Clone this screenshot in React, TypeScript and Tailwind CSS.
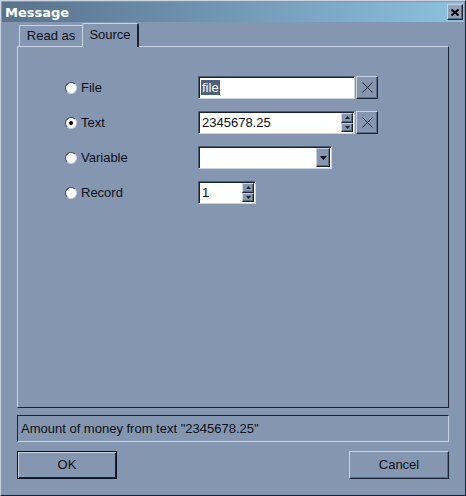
import React from "react";

const raised =
  "border border-t-[#c9d4e0] border-l-[#c9d4e0] border-r-[#1b2230] border-b-[#1b2230] shadow-[inset_-1px_-1px_0_#5d6c82]";
const sunken =
  "border border-t-[#4e5c70] border-l-[#4e5c70] border-r-[#c9d4e0] border-b-[#c9d4e0] shadow-[inset_1px_1px_0_#1b2230]";

export default function App() {
  return (
    <div className="w-[466px] h-[496px] bg-[#8597b0] border border-t-[#c9d4e0] border-l-[#c9d4e0] border-r-[#1b2230] border-b-[#1b2230] flex flex-col font-['Liberation_Sans',Arial,sans-serif] text-[13px] text-[#0b0f16]">
      <div className="mx-px mt-px h-[20px] bg-gradient-to-r from-[#58728c] to-[#8cc2de] flex items-center justify-between pl-[3px] pr-[1px]">
        <span className="font-['DejaVu_Sans',sans-serif] font-bold text-[13px] text-white leading-none">
          Message
        </span>
        <div className={`w-[16px] h-[16px] bg-[#8fa3bb] flex items-center justify-center ${raised}`}>
          <svg width="8" height="7" viewBox="0 0 8 7">
            <path d="M0.5 0.5 L7.5 6.5 M7.5 0.5 L0.5 6.5" stroke="#000" strokeWidth="2" />
          </svg>
        </div>
      </div>

      <div className="px-4 flex flex-col">
        <div className="mt-px h-[23px] flex items-end">
          <div className="ml-[2px] w-[63px] h-[21px] border-t border-l border-[#c9d4e0] rounded-tl-[2px] flex items-center justify-center">
            Read as
          </div>
          <div className="relative z-10 -mb-px w-[57px] h-[24px] bg-[#8597b0] border-t border-l border-t-[#c9d4e0] border-l-[#c9d4e0] border-r-2 border-r-[#1b2230] rounded-t-[2px] flex items-center justify-center pb-[2px]">
            Source
          </div>
        </div>

        <div className="h-[362px] border border-t-[#c9d4e0] border-l-[#c9d4e0] border-r-[#1b2230] border-b-[#1b2230] pl-[47px] pt-[29px] flex flex-col gap-[12px]">
          <Row label="File">
            <div className={`w-[157px] h-[23px] bg-white ${sunken} flex items-center pl-[2px]`}>
              <span className="bg-[#4d617b] text-white px-px leading-[15px]">file</span>
            </div>
            <ClearButton />
          </Row>
          <Row label="Text" checked>
            <div className={`w-[157px] h-[23px] bg-white ${sunken} flex items-stretch`}>
              <span className="flex-1 flex items-center pl-[3px]">2345678.25</span>
              <Spin />
            </div>
            <ClearButton />
          </Row>
          <Row label="Variable">
            <div className={`w-[134px] h-[23px] bg-white ${sunken} flex items-stretch justify-end py-px pr-px`}>
              <div className={`w-[14px] bg-[#8597b0] flex items-center justify-center ${raised}`}>
                <svg width="7" height="4" viewBox="0 0 7 4">
                  <path d="M0 0 H7 L3.5 4 Z" fill="#000" />
                </svg>
              </div>
            </div>
          </Row>
          <Row label="Record">
            <div className={`w-[58px] h-[23px] bg-white ${sunken} flex items-stretch`}>
              <span className="flex-1 flex items-center pl-[3px]">1</span>
              <Spin />
            </div>
          </Row>
        </div>

        <div className="mt-[7px] h-[27px] border border-t-[#1b2230] border-l-[#1b2230] border-r-[#c9d4e0] border-b-[#c9d4e0] flex items-center pl-[3px]">
          Amount of money from text "2345678.25"
        </div>

        <div className="mt-[9px] flex justify-between">
          <div className="w-[100px] h-[28px] border border-[#0d121c] shadow-[inset_1px_1px_0_#c9d4e0,inset_-1px_-1px_0_#1b2230] flex items-center justify-center">
            OK
          </div>
          <div className={`w-[100px] h-[28px] flex items-center justify-center ${raised}`}>
            Cancel
          </div>
        </div>
      </div>
    </div>
  );
}

function Row({
  label,
  checked,
  children,
}: {
  label: string;
  checked?: boolean;
  children: React.ReactNode;
}) {
  return (
    <div className="h-[23px] flex items-center">
      <div className="w-[133px] flex items-center">
        <div className="w-[12px] h-[12px] rounded-full bg-white border border-t-[#3c4758] border-l-[#3c4758] border-r-[#c9d4e0] border-b-[#c9d4e0] flex items-center justify-center">
          {checked && <div className="w-[4px] h-[4px] rounded-full bg-black" />}
        </div>
        <span className="ml-[4px]">{label}</span>
      </div>
      <div className="flex items-center gap-px">{children}</div>
    </div>
  );
}

function ClearButton() {
  return (
    <div className={`w-[22px] h-[23px] flex items-center justify-center ${raised}`}>
      <svg width="11" height="11" viewBox="0 0 11 11">
        <path d="M0.5 0.5 L10.5 10.5 M10.5 0.5 L0.5 10.5" stroke="#1b2230" strokeWidth="1" />
      </svg>
    </div>
  );
}

function Spin() {
  return (
    <div className="w-[13px] flex flex-col py-px pr-px">
      <div className={`flex-1 bg-[#8597b0] flex items-center justify-center ${raised}`}>
        <svg width="5" height="3" viewBox="0 0 5 3">
          <path d="M2.5 0 L5 3 H0 Z" fill="#1b2230" />
        </svg>
      </div>
      <div className={`flex-1 bg-[#8597b0] flex items-center justify-center ${raised}`}>
        <svg width="5" height="3" viewBox="0 0 5 3">
          <path d="M0 0 H5 L2.5 3 Z" fill="#1b2230" />
        </svg>
      </div>
    </div>
  );
}
